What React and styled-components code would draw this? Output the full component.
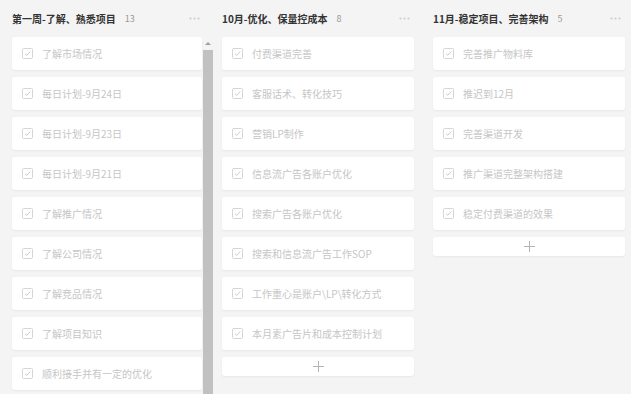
import React from 'react'
import styled, { createGlobalStyle } from 'styled-components'

const GlobalStyle = createGlobalStyle`
	body {
		margin: 0;
		background: #f4f4f4;
		font-family: "Noto Sans CJK SC", "Noto Sans", sans-serif;
	}
`

const columns = [
	{
		title: '第一周-了解、熟悉项目',
		count: 13,
		scroll: true,
		items: [
			'了解市场情况',
			'每日计划-9月24日',
			'每日计划-9月23日',
			'每日计划-9月21日',
			'了解推广情况',
			'了解公司情况',
			'了解竞品情况',
			'了解项目知识',
			'顺利接手并有一定的优化',
		],
	},
	{
		title: '10月-优化、保量控成本',
		count: 8,
		items: [
			'付费渠道完善',
			'客服话术、转化技巧',
			'营销LP制作',
			'信息流广告各账户优化',
			'搜索广告各账户优化',
			'搜索和信息流广告工作SOP',
			'工作重心是账户\\LP\\转化方式',
			'本月素广告片和成本控制计划',
		],
	},
	{
		title: '11月-稳定项目、完善架构',
		count: 5,
		items: ['完善推广物料库', '推迟到12月', '完善渠道开发', '推广渠道完整架构搭建', '稳定付费渠道的效果'],
	},
]

function CheckIcon() {
	return (
		<svg width="11" height="11" viewBox="0 0 11 11" fill="none">
			<rect x="0.5" y="0.5" width="10" height="10" rx="1" stroke="#d6d6d6" />
			<path d="M3 5.6 L4.8 7.3 L8.2 3.6" stroke="#cbcbcb" strokeWidth="1" />
		</svg>
	)
}

function PlusIcon() {
	return (
		<svg width="11" height="11" viewBox="0 0 11 11" fill="none">
			<path d="M5.5 0 V11 M0 5.5 H11" stroke="#b4b4b4" strokeWidth="1" />
		</svg>
	)
}

function DotsIcon() {
	return (
		<svg width="11" height="3" viewBox="0 0 11 3" fill="#cccccc">
			<circle cx="1.5" cy="1.5" r="1.1" />
			<circle cx="5.5" cy="1.5" r="1.1" />
			<circle cx="9.5" cy="1.5" r="1.1" />
		</svg>
	)
}

function Column({ column }) {
	return (
		<ColumnWrap>
			<Header>
				<Title>{column.title}</Title>
				<Count>{column.count}</Count>
				<Dots>
					<DotsIcon />
				</Dots>
			</Header>
			<Body>
				<List>
					{column.items.map((item) => (
						<Card key={item}>
							<CheckIcon />
							<CardText>{item}</CardText>
						</Card>
					))}
					{!column.scroll && (
						<AddButton>
							<PlusIcon />
						</AddButton>
					)}
				</List>
				{column.scroll && (
					<Scrollbar>
						<Arrow />
						<Thumb />
					</Scrollbar>
				)}
			</Body>
		</ColumnWrap>
	)
}

export default function App() {
	return (
		<>
			<GlobalStyle />
			<Board>
				{columns.map((c) => (
					<Column key={c.title} column={c} />
				))}
			</Board>
		</>
	)
}

const Board = styled.div`
	display: flex;
	align-items: flex-start;
	gap: 19px;
	padding: 0 0 0 12px;
	height: 394px;
	overflow: hidden;
	box-sizing: border-box;
`

const ColumnWrap = styled.div`
	display: flex;
	flex-direction: column;
	width: 192px;
	&:first-child {
		width: 201px;
	}
	&:first-child + div {
		margin-left: -10px;
	}
`

const Header = styled.div`
	display: flex;
	align-items: center;
	height: 37px;
	width: 190px;
	padding-right: 2px;
	box-sizing: border-box;
`

const Title = styled.div`
	font-size: 10px;
	font-weight: 700;
	color: #333;
`

const Count = styled.div`
	font-size: 9px;
	color: #999;
	margin-left: 9px;
`

const Dots = styled.div`
	margin-left: auto;
	display: flex;
`

const Body = styled.div`
	display: flex;
	gap: 1px;
`

const List = styled.div`
	display: flex;
	flex-direction: column;
	gap: 7px;
	width: 192px;
	${ColumnWrap}:first-child & {
		width: 190px;
	}
`

const Card = styled.div`
	display: flex;
	align-items: center;
	gap: 9px;
	height: 33px;
	padding: 0 10px;
	background: #fff;
	border-radius: 3px;
	box-shadow: 0 1px 2px rgba(0, 0, 0, 0.05);
	box-sizing: border-box;
`

const CardText = styled.span`
	font-size: 10px;
	color: #c6c6c6;
	white-space: nowrap;
`

const AddButton = styled.div`
	height: 19px;
	display: flex;
	align-items: center;
	justify-content: center;
	background: #fff;
	border-radius: 3px;
	box-shadow: 0 1px 2px rgba(0, 0, 0, 0.05);
`

const Scrollbar = styled.div`
	width: 10px;
	display: flex;
	flex-direction: column;
	align-items: center;
	height: 360px;
`

const Arrow = styled.div`
	width: 0;
	height: 0;
	margin: 5px 0 5px;
	border-left: 3px solid transparent;
	border-right: 3px solid transparent;
	border-bottom: 3px solid #a0a0a0;
`

const Thumb = styled.div`
	width: 10px;
	flex: 1;
	background: #c1c1c1;
`
